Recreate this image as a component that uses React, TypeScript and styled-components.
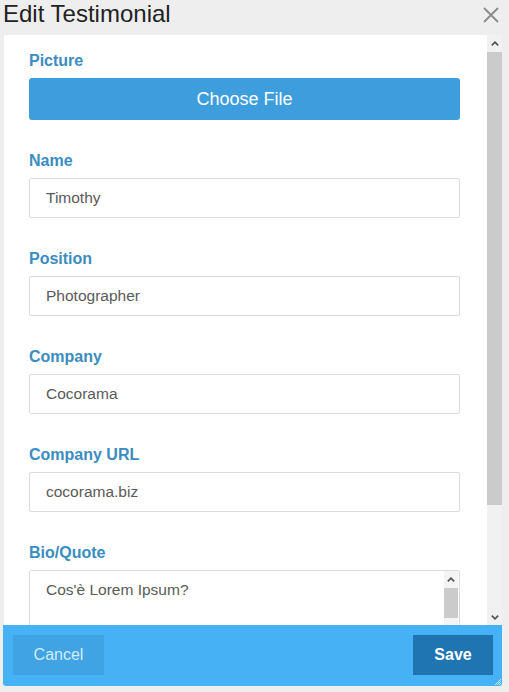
import styled, { createGlobalStyle } from "styled-components"

const GlobalStyle = createGlobalStyle`
  html, body {
    margin: 0;
    padding: 0;
    background: #efeeee;
    font-family: "Liberation Sans", Arial, sans-serif;
  }
  * {
    box-sizing: border-box;
  }
  input, button, textarea {
    font-family: inherit;
  }
`

const Dialog = styled.div`
  width: 509px;
  height: 692px;
  display: flex;
  flex-direction: column;
  background: #efeeee;
`

const TitleBar = styled.div`
  height: 35px;
  display: flex;
  justify-content: space-between;
  align-items: flex-start;
  padding: 0 10px 0 3px;
`

const Title = styled.h1`
  margin: 0;
  font-size: 24px;
  line-height: 27px;
  font-weight: 400;
  color: #222;
`

const CloseButton = styled.button`
  border: none;
  background: none;
  padding: 0;
  margin-top: 7px;
  width: 16px;
  height: 16px;
  display: flex;
  cursor: pointer;
`

const Panel = styled.div`
  display: flex;
  height: 590px;
  margin-left: 4px;
  margin-right: 7px;
  background: #fff;
  overflow: hidden;
`

const Form = styled.div`
  flex: 1;
  overflow: hidden;
  padding: 16px 27px 0 25px;
`

const Field = styled.div`
  display: flex;
  flex-direction: column;
  gap: 7px;
  margin-bottom: 31px;
`

const Label = styled.label`
  font-size: 16px;
  line-height: 20px;
  font-weight: 700;
  color: #3a8cc1;
`

const FileButton = styled.button`
  height: 42px;
  border: none;
  border-radius: 3px;
  background: #3d9ddd;
  color: #fff;
  font-size: 18px;
  cursor: pointer;
`

const TextInput = styled.input`
  height: 40px;
  border: 1px solid #dcdcdc;
  border-radius: 2px;
  padding: 0 16px;
  font-size: 15.5px;
  color: #5a5a5a;
  background: #fff;
  outline: none;
`

const TextArea = styled.div`
  height: 120px;
  display: flex;
  border: 1px solid #dcdcdc;
  border-radius: 2px;
  padding-right: 1px;
`

const TextAreaBody = styled.div`
  flex: 1;
  padding: 9px 16px;
  font-size: 15.5px;
  line-height: 20px;
  color: #5a5a5a;
`

const Track = styled.div<{ $width: number; $bg: string }>`
  width: ${(p) => p.$width}px;
  flex-shrink: 0;
  display: flex;
  flex-direction: column;
  background: ${(p) => p.$bg};
`

const Arrow = styled.div<{ $height: number }>`
  height: ${(p) => p.$height}px;
  display: flex;
  align-items: center;
  justify-content: center;
`

const Thumb = styled.div<{ $height: number }>`
  height: ${(p) => p.$height}px;
  background: #cbcbcb;
`

const TrackRest = styled.div`
  flex: 1;
`

const Footer = styled.div`
  height: 61px;
  margin-left: 3px;
  margin-right: 7px;
  display: flex;
  justify-content: space-between;
  align-items: center;
  padding: 0 9px 1px 10px;
  background: #47b1f6;
  border-radius: 0 0 3px 3px;
  position: relative;
`

const FooterButton = styled.button<{ $primary?: boolean }>`
  height: 40px;
  width: ${(p) => (p.$primary ? 80 : 91)}px;
  border: none;
  border-radius: 0;
  font-size: 16px;
  font-weight: ${(p) => (p.$primary ? 700 : 400)};
  color: ${(p) => (p.$primary ? "#fff" : "#d4ecfb")};
  background: ${(p) => (p.$primary ? "#1f75b1" : "#3fa3e4")};
  cursor: pointer;
`

const Grip = styled.svg`
  position: absolute;
  right: 1px;
  bottom: 1px;
`

function Chevron({ up }: { up?: boolean }) {
  return (
    <svg width="8" height="5" viewBox="0 0 8 5">
      <path
        d={up ? "M0.8 4.4 L4 1.2 L7.2 4.4" : "M0.8 0.6 L4 3.8 L7.2 0.6"}
        fill="none"
        stroke="#505050"
        strokeWidth="1.6"
      />
    </svg>
  )
}

const fields = [
  { label: "Name", value: "Timothy" },
  { label: "Position", value: "Photographer" },
  { label: "Company", value: "Cocorama" },
  { label: "Company URL", value: "cocorama.biz" },
]

export default function App() {
  return (
    <>
      <GlobalStyle />
      <Dialog>
        <TitleBar>
          <Title>Edit Testimonial</Title>
          <CloseButton aria-label="Close">
            <svg width="16" height="16" viewBox="0 0 16 16">
              <path d="M1 1 L15 15 M15 1 L1 15" stroke="#8a8a8a" strokeWidth="1.8" />
            </svg>
          </CloseButton>
        </TitleBar>

        <Panel>
          <Form>
            <Field>
              <Label>Picture</Label>
              <FileButton>Choose File</FileButton>
            </Field>

            {fields.map((f) => (
              <Field key={f.label}>
                <Label>{f.label}</Label>
                <TextInput defaultValue={f.value} readOnly />
              </Field>
            ))}

            <Field>
              <Label>Bio/Quote</Label>
              <TextArea>
                <TextAreaBody>Cos'è Lorem Ipsum?</TextAreaBody>
                <Track $width={14} $bg="#f4f4f4">
                  <Arrow $height={17}>
                    <Chevron up />
                  </Arrow>
                  <Thumb $height={30} />
                  <TrackRest />
                </Track>
              </TextArea>
            </Field>
          </Form>

          <Track $width={15} $bg="#f1f1f1">
            <Arrow $height={17}>
              <Chevron up />
            </Arrow>
            <Thumb $height={453} />
            <TrackRest />
            <Arrow $height={15}>
              <Chevron />
            </Arrow>
          </Track>
        </Panel>

        <Footer>
          <FooterButton>Cancel</FooterButton>
          <FooterButton $primary>Save</FooterButton>
          <Grip width="6" height="6" viewBox="0 0 6 6">
            <path d="M6 0 L0 6 M6 2 L2 6 M6 4 L4 6" stroke="#e6f4fd" strokeWidth="0.8" />
          </Grip>
        </Footer>
      </Dialog>
    </>
  )
}
